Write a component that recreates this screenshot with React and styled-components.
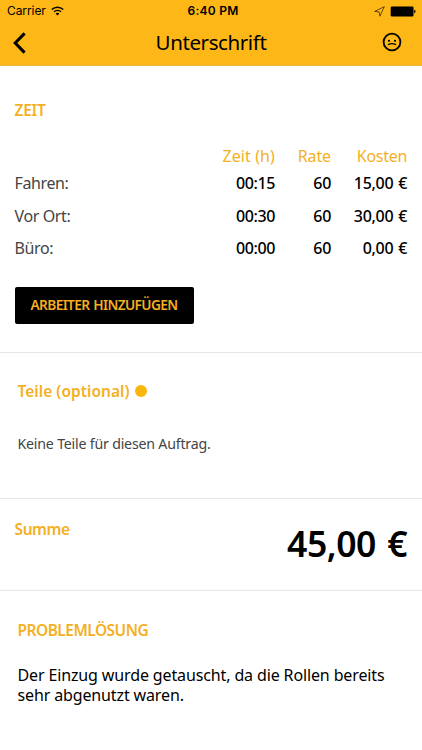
import React from 'react';
import styled, { createGlobalStyle } from 'styled-components';

const Global = createGlobalStyle`
  *, *::before, *::after { box-sizing: border-box; }
  body { margin: 0; background: #fff; }
  h1, h2, p { margin: 0; }
`;

const Screen = styled.div`
  width: 100%;
  height: 750px;
  overflow: hidden;
  background: #fff;
  color: #000;
  font-family: 'Noto Sans', sans-serif;
  font-size: 16px;
`;

const Header = styled.header`
  height: 66px;
  background: #fdb716;
  border-bottom: 1px solid #f1b53a;
`;

const StatusBar = styled.div`
  display: grid;
  grid-template-columns: 1fr auto 1fr;
  align-items: center;
  height: 21px;
  padding: 0 6px 0 7px;
  font-family: Inter, sans-serif;
  font-size: 12px;
  line-height: 22px;
`;

const Carrier = styled.div`
  display: flex;
  align-items: center;
  gap: 5px;
  letter-spacing: -0.08px;
`;

const Clock = styled.div`
  font-weight: 600;
  letter-spacing: 0.25px;
  padding-left: 3px;
`;

const Indicators = styled.div`
  display: flex;
  justify-content: flex-end;
  align-items: center;
  gap: 5px;
`;

const NavBar = styled.div`
  display: grid;
  grid-template-columns: 60px 1fr 60px;
  align-items: center;
  height: 42px;
`;

const NavButton = styled.button`
  display: flex;
  justify-content: ${(p) => (p.$end ? 'flex-end' : 'flex-start')};
  padding: ${(p) => (p.$end ? '0 20px 0 0' : '2px 0 0 12px')};
  border: 0;
  background: none;
  color: #000;
`;

const Title = styled.h1`
  font-size: 20.5px;
  font-weight: 400;
  line-height: 40px;
  letter-spacing: -0.4px;
  text-align: center;
`;

const Section = styled.section`
  height: ${(p) => p.$height}px;
  padding: ${(p) => p.$pad};
  border-bottom: ${(p) => (p.$last ? '0' : '1px solid #e6e6e6')};
`;

const Heading = styled.h2`
  display: flex;
  align-items: center;
  gap: 5px;
  color: #f4b024;
  font-size: 15.5px;
  font-weight: 600;
  line-height: 20px;
  letter-spacing: ${(p) => p.$track || 0}px;
`;

const Dot = styled.span`
  width: 12px;
  height: 12px;
  border-radius: 50%;
  background: #fbb60c;
`;

const TimeTable = styled.table`
  width: 100%;
  margin-top: 25px;
  border-collapse: collapse;
  table-layout: fixed;
  line-height: 20px;
  letter-spacing: -0.16px;
`;

const Col = styled.col`
  width: ${(p) => p.$w};
`;

const HeadCell = styled.th`
  height: 22px;
  padding: 0 0 1px;
  color: #f4b024;
  font-weight: 400;
  text-align: right;
  letter-spacing: ${(p) => p.$track || 0}px;
`;

const LabelCell = styled.th`
  height: 32.5px;
  padding: 0;
  color: #444;
  font-weight: 400;
  text-align: left;
  letter-spacing: -0.38px;
`;

const ValueCell = styled.td`
  padding: 0;
  font-weight: 500;
  text-align: right;
  letter-spacing: ${(p) => p.$track || 0}px;
  word-spacing: 1px;
`;

const AddButton = styled.button`
  display: block;
  width: 179px;
  height: 37px;
  margin-top: 22px;
  padding: 0 0 1px;
  border: 0;
  border-radius: 2px;
  background: #000;
  color: #f4b024;
  font-family: inherit;
  font-size: 13.7px;
  font-weight: 600;
  letter-spacing: -0.63px;
  word-spacing: 1px;
  white-space: nowrap;
`;

const Note = styled.p`
  margin-top: 33px;
  color: #444;
  font-size: 14.2px;
  line-height: 20px;
  letter-spacing: -0.21px;
`;

const SumRow = styled.div`
  display: flex;
  justify-content: space-between;
  align-items: flex-start;
`;

const Total = styled.div`
  font-size: 35.6px;
  font-weight: 600;
  line-height: 48px;
  letter-spacing: -0.5px;
  word-spacing: 2.5px;
`;

const Solution = styled.p`
  margin-top: 25px;
  line-height: 20px;
  letter-spacing: -0.13px;
`;

const WifiIcon = () => (
  <svg width="13" height="10" viewBox="0 0 13 10" fill="none" stroke="#000">
    <path d="M.8 3.5C4 .4 9 .4 12.2 3.5" strokeWidth="1.6" />
    <path d="M3 5.8C5 4 8 4 10 5.8" strokeWidth="1.5" />
    <path d="M4.6 7.4C5.8 6.4 7.2 6.4 8.4 7.4L6.5 9.5Z" fill="#000" stroke="none" />
  </svg>
);

const LocationIcon = () => (
  <svg width="11" height="11" viewBox="0 0 11 11" fill="none" stroke="#000" strokeWidth=".6" strokeLinejoin="round">
    <path d="M10.3.7.7 5.4 5.1 5.9 5.9 10.2Z" />
  </svg>
);

const BatteryIcon = () => (
  <svg width="26" height="11" viewBox="0 0 26 11">
    <rect x=".7" y=".5" width="22.8" height="10" rx="1.3" fill="#000" />
    <path d="M24.2 3.8c1 .2 1.3.8 1.3 1.7s-.3 1.5-1.3 1.7z" fill="#000" />
  </svg>
);

const BackIcon = () => (
  <svg width="15" height="24" viewBox="0 0 15 24" fill="none" stroke="#000" strokeWidth="3">
    <path d="M12.6 2.4 3.2 12l9.4 9.6" />
  </svg>
);

const FaceIcon = () => (
  <svg width="20" height="20" viewBox="0 0 20 20" fill="none" stroke="#000">
    <circle cx="10" cy="10" r="8.4" strokeWidth="1.8" />
    <circle cx="7" cy="8.8" r="1.1" fill="#000" stroke="none" />
    <circle cx="13" cy="8.8" r="1.1" fill="#000" stroke="none" />
    <path d="M5.8 12.7C8 11.6 12 11.6 14.2 12.7" strokeWidth="1.2" />
  </svg>
);

const rows = [
  { label: 'Fahren:', time: '00:15', rate: '60', cost: '15,00 €' },
  { label: 'Vor Ort:', time: '00:30', rate: '60', cost: '30,00 €' },
  { label: 'Büro:', time: '00:00', rate: '60', cost: '0,00 €' },
];

export default function App() {
  return (
    <Screen>
      <Global />
      <Header>
        <StatusBar>
          <Carrier>Carrier <WifiIcon /></Carrier>
          <Clock>6:40 PM</Clock>
          <Indicators><LocationIcon /><BatteryIcon /></Indicators>
        </StatusBar>
        <NavBar>
          <NavButton aria-label="Zurück"><BackIcon /></NavButton>
          <Title>Unterschrift</Title>
          <NavButton $end aria-label="Status"><FaceIcon /></NavButton>
        </NavBar>
      </Header>

      <Section $height={287} $pad="34px 15px 0 14.5px">
        <Heading $track={-0.25}>ZEIT</Heading>
        <TimeTable>
          <colgroup>
            <Col /><Col $w="90px" /><Col $w="56px" /><Col $w="76px" />
          </colgroup>
          <thead>
            <tr>
              <HeadCell />
              <HeadCell $track={0.1}>Zeit (h)</HeadCell>
              <HeadCell $track={-0.1}>Rate</HeadCell>
              <HeadCell $track={-0.3}>Kosten</HeadCell>
            </tr>
          </thead>
          <tbody>
            {rows.map((r) => (
              <tr key={r.label}>
                <LabelCell>{r.label}</LabelCell>
                <ValueCell $track={-0.4}>{r.time}</ValueCell>
                <ValueCell $track={-0.3}>{r.rate}</ValueCell>
                <ValueCell $track={-0.3}>{r.cost}</ValueCell>
              </tr>
            ))}
          </tbody>
        </TimeTable>
        <AddButton>ARBEITER HINZUFÜGEN</AddButton>
      </Section>

      <Section $height={146} $pad="28px 17.5px 0">
        <Heading $track={0.03}>Teile (optional) <Dot /></Heading>
        <Note>Keine Teile für diesen Auftrag.</Note>
      </Section>

      <Section $height={92} $pad="20px 15px 0 14.5px">
        <SumRow>
          <Heading $track={-0.4}>Summe</Heading>
          <Total>45,00 €</Total>
        </SumRow>
      </Section>

      <Section $last $height={159} $pad="29px 17.5px 0">
        <Heading $track={-0.52}>PROBLEMLÖSUNG</Heading>
        <Solution>Der Einzug wurde getauscht, da die Rollen bereits sehr abgenutzt waren.</Solution>
      </Section>
    </Screen>
  );
}
